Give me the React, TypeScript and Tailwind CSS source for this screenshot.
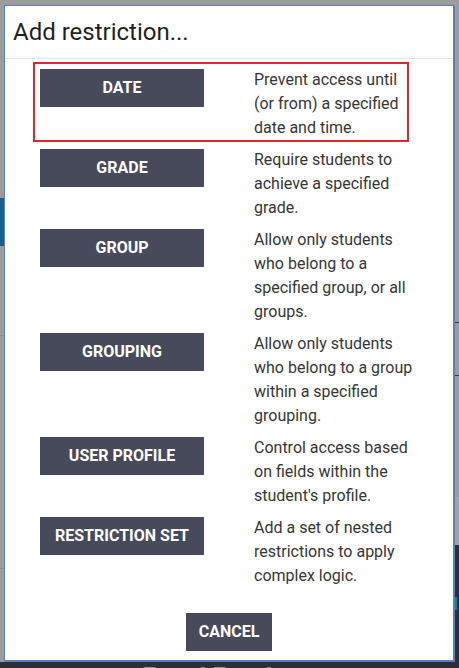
import React from 'react';

interface Restriction {
  label: string;
  lines: string[];
}

const restrictions: Restriction[] = [
  { label: 'DATE', lines: ['Prevent access until', '(or from) a specified', 'date and time.'] },
  { label: 'GRADE', lines: ['Require students to', 'achieve a specified', 'grade.'] },
  { label: 'GROUP', lines: ['Allow only students', 'who belong to a', 'specified group, or all', 'groups.'] },
  { label: 'GROUPING', lines: ['Allow only students', 'who belong to a group', 'within a specified', 'grouping.'] },
  { label: 'USER PROFILE', lines: ['Control access based', 'on fields within the', "student's profile."] },
  { label: 'RESTRICTION SET', lines: ['Add a set of nested', 'restrictions to apply', 'complex logic.'] },
];

const App: React.FC = () => {
  return (
    <div className="w-[459px] h-[668px] overflow-hidden bg-[#9c9c9c] font-['Roboto',sans-serif] flex flex-col">
      <div className="h-[662px] flex shrink-0">
        {/* page behind the backdrop, left edge */}
        <div className="w-[4px] flex flex-col">
          <div className="h-[198px]" />
          <div className="h-[48px] bg-[#1a5e8e]" />
          <div className="h-[89px]" />
          <div className="h-px bg-[#8a8a8a]" />
          <div className="h-[232px]" />
          <div className="h-px bg-[#8a8a8a]" />
        </div>

        {/* modal */}
        <div className="mt-[5px] w-[451px] h-[657px] bg-white border-[#5b7fc3] border-t border-l border-r-2 border-b-2 flex flex-col">
          <div className="h-[53px] flex items-center pl-[8px] border-b border-[#e4e4e4]">
            <h5 className="text-[24px] text-[#1f1f1f]">Add restriction...</h5>
          </div>

          <div className="pt-[3px] flex flex-col">
            {restrictions.map((r, i) => (
              <div
                key={r.label}
                className={`ml-[28px] w-[376px] border-2 pt-[4px] pl-[5px] flex ${i === 0 ? 'border-[#e5252b]' : 'border-transparent'}`}
              >
                <button className="mt-[1px] w-[164px] h-[38px] shrink-0 bg-[#474a5a] text-white text-[16px] font-bold">
                  {r.label}
                </button>
                <div className="ml-[50px] text-[16px] leading-[24px] text-[#363636] whitespace-nowrap">
                  {r.lines.map((l) => (
                    <div key={l}>{l}</div>
                  ))}
                </div>
              </div>
            ))}

            <div className="mt-[23px] flex justify-center">
              <button className="h-[38px] px-[13px] bg-[#474a5a] text-white text-[16px] font-bold">
                CANCEL
              </button>
            </div>
          </div>
        </div>

        {/* page behind the backdrop, right edge */}
        <div className="flex-1 flex flex-col">
          <div className="h-[322px]" />
          <div className="h-px bg-[#3a3a3a]" />
          <div className="h-[52px]" />
          <div className="h-px bg-[#3a3a3a]" />
          <div className="h-[121px]" />
          <div className="h-[48px] bg-[#a3a3a3]" />
          <div className="flex-1 bg-[#2c2f3a] flex flex-col">
            <div className="h-[52px]" />
            <div className="h-[13px] w-[2px] bg-[#1c7d9a]" />
          </div>
        </div>
      </div>

      {/* bottom of the page behind */}
      <div className="flex-1 bg-[#2c2f3a] pl-[143px] pt-[1px] font-['Liberation_Serif',serif] text-[26px] leading-[26px] text-[#9a9aa0] whitespace-nowrap">
        Board Bench
      </div>
    </div>
  );
};

export default App;
